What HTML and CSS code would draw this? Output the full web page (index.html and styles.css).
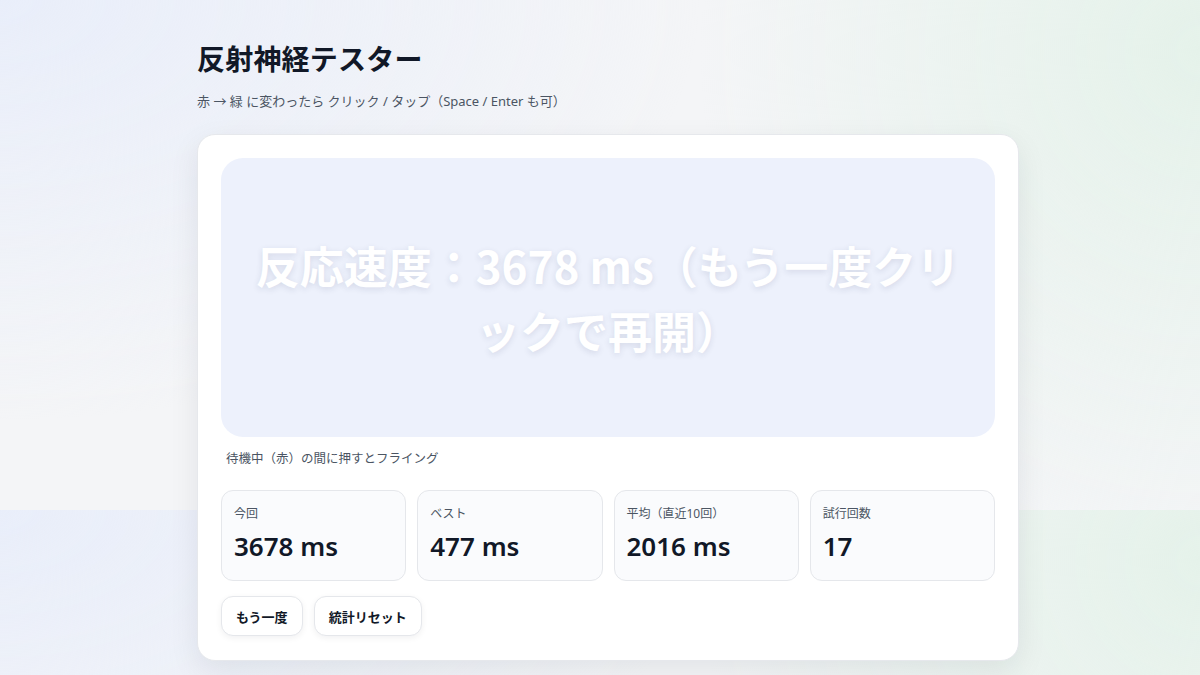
FILE: index.html
```html
<!DOCTYPE html>
<html lang="ja">
<head>
<meta charset="utf-8">
<title>反射神経テスター</title>
<link rel="stylesheet" href="styles.css">
</head>
<body>
<main class="wrap">
  <h1 class="title">反射神経テスター</h1>
  <p class="sub">赤 <span class="arrow">→</span> 緑 に変わったら クリック / タップ（Space / Enter も可）</p>
  <section class="card">
    <div class="stage">
      <div class="stage-text">反応速度：3678 ms（もう一度クリックで再開）</div>
    </div>
    <p class="hint">待機中（赤）の間に押すとフライング</p>
    <div class="stats">
      <div class="stat"><div class="label">今回</div><div class="value">3678 ms</div></div>
      <div class="stat"><div class="label">ベスト</div><div class="value">477 ms</div></div>
      <div class="stat"><div class="label">平均（直近10回）</div><div class="value">2016 ms</div></div>
      <div class="stat"><div class="label">試行回数</div><div class="value">17</div></div>
    </div>
    <div class="actions">
      <button class="btn">もう一度</button>
      <button class="btn">統計リセット</button>
    </div>
  </section>
</main>
</body>
</html>
```
FILE: styles.css
```css
html, body {
  margin: 0;
  padding: 0;
}
body {
  font-family: "Noto Sans", "Noto Sans CJK JP", sans-serif;
  color: #111827;
  min-height: 675px;
  padding-left: 16px;
  box-sizing: border-box;
  background:
    radial-gradient(700px 420px at 0% 0%, #e9eefa 0%, rgba(233,238,250,0) 100%),
    radial-gradient(500px 520px at 100% 10%, #e5f2ea 0%, rgba(229,242,234,0) 100%),
    #f4f5f7;
  background-size: 100% 510px;
  background-repeat: repeat-y;
}
.wrap {
  max-width: 822px;
  margin: 0 auto;
  padding-top: 38px;
}
.title {
  margin: 0;
  font-size: 28px;
  font-weight: 700;
  line-height: 42px;
  color: #111827;
  letter-spacing: 0.2px;
}
.sub {
  margin: 11px 0 0;
  font-size: 13px;
  line-height: 20px;
  color: #4b5563;
}
.arrow {
  font-family: "Noto Sans CJK JP", sans-serif;
}
.card {
  margin-top: 23px;
  background: #fff;
  border: 1px solid #e6e8ec;
  border-radius: 18px;
  padding: 23px 23px 24px;
  box-shadow: 0 10px 30px rgba(15, 23, 42, 0.08);
}
.stage {
  height: 279px;
  border-radius: 22px;
  background: #edf1fc;
  display: flex;
  align-items: center;
  justify-content: center;
  padding: 0 30px;
}
.stage-text {
  font-family: "Noto Sans CJK JP", sans-serif;
  font-weight: 700;
  font-size: 44px;
  line-height: 65px;
  color: #ffffff;
  text-align: center;
  text-shadow: 0 2px 6px rgba(30, 41, 80, 0.12);
}
.hint {
  margin: 12px 0 0 5px;
  font-size: 12.5px;
  line-height: 20px;
  color: #4b5563;
}
.stats {
  margin-top: 21px;
  display: grid;
  grid-template-columns: repeat(4, 1fr);
  gap: 11px;
}
.stat {
  height: 91px;
  box-sizing: border-box;
  border: 1px solid #e5e7eb;
  border-radius: 12px;
  background: #fafbfd;
  padding: 14px 12px 0;
}
.label {
  font-size: 12px;
  line-height: 18px;
  color: #4b5563;
}
.value {
  margin-top: 6px;
  font-size: 26px;
  line-height: 34px;
  font-weight: 600;
  color: #111827;
}
.actions {
  margin-top: 15px;
  display: flex;
  gap: 11px;
}
.btn {
  font-family: "Noto Sans CJK JP", sans-serif;
  font-size: 13px;
  font-weight: 700;
  color: #111827;
  height: 40px;
  padding: 0 14px;
  background: #fff;
  border: 1px solid #e5e7eb;
  border-radius: 12px;
  box-shadow: 0 2px 6px rgba(15, 23, 42, 0.06);
  cursor: pointer;
}
```
